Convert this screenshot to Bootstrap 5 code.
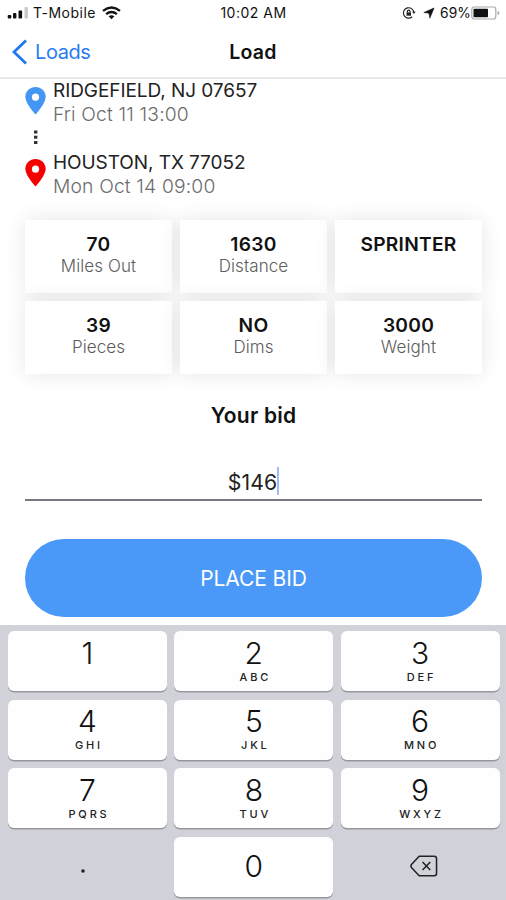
<!DOCTYPE html>
<html lang="en">
<head>
<meta charset="utf-8">
<meta name="viewport" content="width=device-width, initial-scale=1">
<title>Load</title>
<link href="https://cdn.jsdelivr.net/npm/bootstrap@5.3.0/dist/css/bootstrap.min.css" rel="stylesheet">
<style>
body{font-family:Inter,"Liberation Sans",sans-serif;color:#111;background:#fff;width:506px;height:900px;overflow:hidden}
svg{display:block;flex:none}
.g3{display:grid;grid-template-columns:1fr auto 1fr}
.status{height:25px;padding:0 6px 0 7px;font-size:14px;line-height:26px;letter-spacing:.5px}
.pct{font-size:13.8px;letter-spacing:.1px;padding-left:5px}
.wifi{margin-left:6px}
.arrow{margin-left:7px}
.titlebar{height:54px;padding:0 12px;border-bottom:2px solid #e9e9e9;font-size:20px;line-height:54px}
.titlebar .back{color:#2b7cf0;letter-spacing:-.4px}
.loads{padding-left:7px}
.title{font-weight:600;font-size:19.5px;letter-spacing:.2px}
.main{height:546px;padding:0 24px 0 25px}
.stop{height:48px;gap:7px}
.place{font-size:19px;line-height:24px;color:#222;letter-spacing:-.07px}
.when{font-size:19.3px;line-height:23px;color:#6c6c6c;font-weight:300;letter-spacing:.15px}
.dots{height:24px}
.tiles{display:grid;grid-template-columns:repeat(3,1fr);gap:8px;margin-top:21px}
.tile{height:73px;padding-top:13px;background:#fff;box-shadow:0 0 20px rgba(0,0,0,.1)}
.val{font-weight:600;font-size:19.2px;line-height:22px;color:#111;letter-spacing:.25px}
.lab{font-weight:300;font-size:17px;line-height:22px;color:#5c5c5c;letter-spacing:.1px}
.bidhead{font-weight:600;font-size:21px;line-height:28px;margin-top:28px;letter-spacing:.2px}
.field{height:38px;margin-top:33px;padding-top:4px;border-bottom:2px solid #777980;font-size:21.2px;line-height:30px;color:#222;letter-spacing:.1px}
.caret{width:2px;height:28px;background:#a5b9f5}
.bid{height:78px;margin-top:37.500px;padding-top:8px;background:#4a98f7;color:#fff;font-size:21px;font-weight:400;letter-spacing:-.1px}
.pad{height:275px;background:#d1d2d9;display:grid;grid-template-columns:repeat(3,159px);grid-auto-rows:60px;column-gap:7.3px;row-gap:8.6px;padding:6px 0 0 8px}
.key{border-radius:6px;background:#fefefe;box-shadow:0 1.5px 0 #96979c;padding-top:4.500px}
.num{font-size:30px;line-height:34px;font-weight:300;color:#111}
.abc{font-size:11px;line-height:14px;font-weight:500;letter-spacing:2.8px;padding-left:3px;color:#222}
.point{padding:4px 10px 0 0}
.erase{padding:0 0 2px 7px}
</style>
<script src="https://cdn.jsdelivr.net/npm/bootstrap@5.3.0/dist/js/bootstrap.bundle.min.js"></script>
</head>
<body>
<div class="status g3">
  <div class="d-flex align-items-center">
    <svg width="22" height="14" viewBox="0 0 22 14"><g fill="#111"><rect x=".7" y="9" width="3.600" height="3.500" rx="1"/><rect x="6" y="7" width="3.400" height="5.500" rx="1"/><rect x="11.500" y="4.500" width="3.600" height="8" rx="1"/></g><rect x="17.500" y="1" width="3.400" height="11.500" rx="1" fill="#c9c9c9"/></svg>
    <span class="ms-1">T-Mobile</span>
    <svg class="wifi" width="19" height="14" viewBox="0 0 19 14" fill="none" stroke="#111" stroke-width="2.300"><path d="M1 4.900Q9.500-1.900 18 4.900M4.100 8.200Q9.500 3.900 14.900 8.200"/><path d="M6.600 10.300Q9.500 8 12.400 10.300L9.500 13.300Z" fill="#111" stroke="none"/></svg>
  </div>
  <div>10:02 AM</div>
  <div class="d-flex align-items-center justify-content-end">
    <svg width="14" height="14" viewBox="0 0 14 14" fill="none" stroke="#222" stroke-width="1.200"><path d="M11.800 7A5.200 5.200 0 1 0 10.200 10.700"/><path d="M10 5.800l1.900 1.900 1.800-1.900z" fill="#222" stroke="none"/><rect x="4.500" y="6.400" width="4.500" height="3.300" fill="#222" stroke="none"/><path d="M5.400 6.500V5.500a1.300 1.300 0 0 1 2.600 0v1"/></svg>
    <svg class="arrow" width="12" height="12" viewBox="0 0 12 13"><path d="M11.500 1L6.900 12.100 6 6.700.4 6z" fill="#111" stroke="#111" stroke-width=".6"/></svg>
    <span class="pct">69%</span>
    <svg width="29" height="14" viewBox="0 0 29 14"><rect x=".8" y="1" width="24" height="12" rx="2.500" fill="none" stroke="#aaa" stroke-width="1.200"/><rect x="2.500" y="2.800" width="14.500" height="8.400" rx=".8" fill="#111"/><path d="M26.500 5v4q2-.5 2-2t-2-2z" fill="#aaa"/></svg>
  </div>
</div>
<header class="titlebar g3">
  <div class="back d-flex align-items-center">
    <svg width="16" height="26" viewBox="0 0 16 26" fill="none" stroke="#1d78f2" stroke-width="2.800"><path d="M14 1.500L2 13l12 11.500"/></svg>
    <span class="loads">Loads</span>
  </div>
  <div class="title">Load</div>
  <div></div>
</header>
<main class="main">
  <div class="stop d-flex">
    <svg class="mt-2" width="21" height="28" viewBox="0 0 21 29"><path d="M10.500 0C4.700 0 0 4.500 0 10.200 0 17.500 10.500 28.500 10.500 28.500S21 17.500 21 10.200C21 4.500 16.300 0 10.500 0z" fill="#4496f5"/><circle cx="10.500" cy="10.500" r="3.700" fill="#fff"/></svg>
    <div><div class="place">RIDGEFIELD, NJ 07657</div><div class="when">Fri Oct 11 13:00</div></div>
  </div>
  <div class="dots ps-2"><svg width="5" height="24" viewBox="0 0 5 24" fill="#333"><rect x="1" y="3.500" width="3.400" height="3"/><rect x="1" y="8.700" width="3.400" height="3"/><rect x="1" y="14" width="3.400" height="3"/></svg></div>
  <div class="stop d-flex">
    <svg class="mt-2" width="21" height="28" viewBox="0 0 21 29"><path d="M10.500 0C4.700 0 0 4.500 0 10.200 0 17.500 10.500 28.500 10.500 28.500S21 17.500 21 10.200C21 4.500 16.300 0 10.500 0z" fill="#f50000"/><circle cx="10.500" cy="10.500" r="3.700" fill="#fff"/></svg>
    <div><div class="place">HOUSTON, TX 77052</div><div class="when">Mon Oct 14 09:00</div></div>
  </div>
  <div class="tiles text-center">
    <div class="tile"><div class="val">70</div><div class="lab">Miles Out</div></div>
    <div class="tile"><div class="val">1630</div><div class="lab">Distance</div></div>
    <div class="tile"><div class="val">SPRINTER</div></div>
    <div class="tile"><div class="val">39</div><div class="lab">Pieces</div></div>
    <div class="tile"><div class="val">NO</div><div class="lab">Dims</div></div>
    <div class="tile"><div class="val">3000</div><div class="lab">Weight</div></div>
  </div>
  <div class="bidhead text-center">Your bid</div>
  <div class="field d-flex justify-content-center"><span>$146</span><span class="caret"></span></div>
  <button class="btn bid w-100 rounded-pill border-0" type="button">PLACE BID</button>
</main>
<div class="pad text-center">
  <div class="key"><div class="num">1</div></div>
  <div class="key"><div class="num">2</div><div class="abc">ABC</div></div>
  <div class="key"><div class="num">3</div><div class="abc">DEF</div></div>
  <div class="key"><div class="num">4</div><div class="abc">GHI</div></div>
  <div class="key"><div class="num">5</div><div class="abc">JKL</div></div>
  <div class="key"><div class="num">6</div><div class="abc">MNO</div></div>
  <div class="key"><div class="num">7</div><div class="abc">PQRS</div></div>
  <div class="key"><div class="num">8</div><div class="abc">TUV</div></div>
  <div class="key"><div class="num">9</div><div class="abc">WXYZ</div></div>
  <div class="point d-flex align-items-center justify-content-center"><svg width="4" height="8" viewBox="0 0 4 8"><circle cx="2" cy="6" r="1.800" fill="#222"/></svg></div>
  <div class="key pt-2"><div class="num mt-1">0</div></div>
  <div class="erase d-flex align-items-center justify-content-center"><svg width="28" height="22" viewBox="0 0 29 22" fill="none" stroke="#222" stroke-width="1.600" stroke-linejoin="round"><path d="M9.500 1H25Q27.500 1 27.500 3.500V18.500Q27.500 21 25 21H9.500L1.500 12.500Q.5 11 1.500 9.500Z"/><path d="M13 6.800l8 8.400M21 6.800l-8 8.400"/></svg></div>
</div>
</body>
</html>
